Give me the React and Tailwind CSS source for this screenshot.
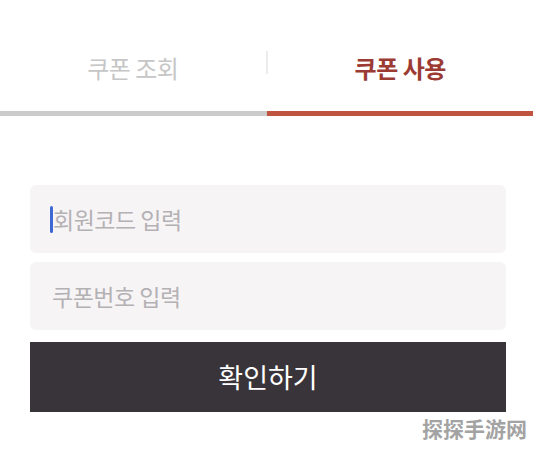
import React from 'react';

const font = { fontFamily: '"Noto Sans CJK KR", "Noto Sans", sans-serif' };

export default function App() {
    return (
        <div
            className="relative w-[533px] h-[450px] overflow-hidden bg-white"
            style={font}
        >
            {/* 탭 */}
            <div className="flex h-[111px] items-center pt-[24px]">
                <div className="flex flex-1 justify-center text-[24px] text-[#c6c6c6] tracking-[-0.5px]">
                    쿠폰 조회
                </div>
                <div className="w-[2px] h-[23px] bg-[#ececec] -mt-[10px]" />
                <div className="flex flex-1 justify-center text-[24px] font-bold text-[#9b3b33] tracking-[-0.5px]">
                    쿠폰 사용
                </div>
            </div>
            <div className="flex h-[5px]">
                <div className="w-[267px] bg-[#cbcbcb]" />
                <div className="flex-1 bg-[#bf5540]" />
            </div>

            {/* 입력 폼 */}
            <div className="flex flex-col px-[30px] pt-[69px] pr-[27px]">
                <div className="flex h-[68px] items-center rounded-[6px] bg-[#f7f4f6] pl-[20px]">
                    <span className="w-[3px] h-[27px] rounded-sm bg-[#3e68d4]" />
                    <span className="text-[23px] text-[#b4b1b4] tracking-[-0.5px]">회원코드 입력</span>
                </div>
                <div className="mt-[9px] flex h-[68px] items-center rounded-[6px] bg-[#f7f4f6] pl-[22px]">
                    <span className="text-[23px] text-[#b4b1b4] tracking-[-0.5px]">쿠폰번호 입력</span>
                </div>
                <button className="mt-[12px] flex h-[70px] items-center justify-center bg-[#393439] text-[27px] text-white">
                    확인하기
                </button>
            </div>

            {/* 워터마크 */}
            <div
                className="absolute right-[6px] bottom-[6px] text-[21px] font-bold text-[#a3a3a3]"
                style={{ fontFamily: '"Noto Sans CJK SC", sans-serif' }}
            >
                探探手游网
            </div>
        </div>
    );
}
